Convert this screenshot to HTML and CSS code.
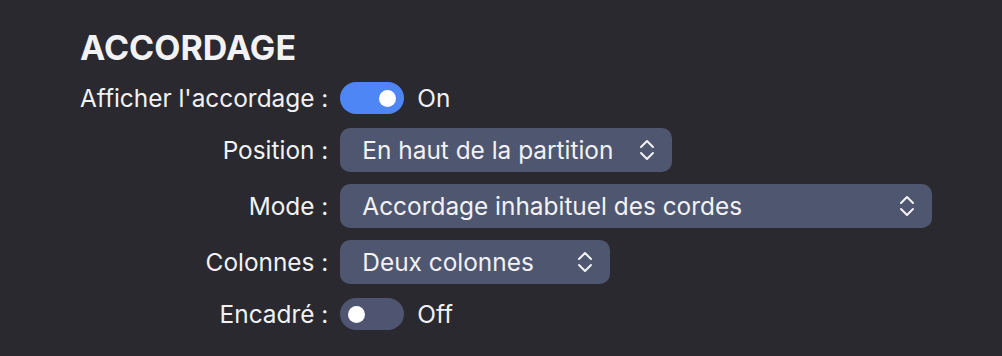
FILE: index.html
```html
<!DOCTYPE html>
<html lang="fr">
<head>
<meta charset="utf-8">
<link rel="stylesheet" href="styles.css">
</head>
<body>
<section class="panel">
  <h1 class="title">ACCORDAGE</h1>
  <div class="form">
    <label class="label">Afficher l'accordage :</label>
    <div class="control control-toggle">
      <span class="toggle toggle-on"><span class="knob"></span></span>
      <span class="state">On</span>
    </div>

    <label class="label">Position :</label>
    <div class="control">
      <div class="select select-position">
        <span class="select-text">En haut de la partition</span>
        <svg class="chevrons" width="16" height="24" viewBox="0 0 16 24"><polyline points="2,9 8,3 14,9"/><polyline points="2,15 8,21 14,15"/></svg>
      </div>
    </div>

    <label class="label">Mode :</label>
    <div class="control">
      <div class="select select-mode">
        <span class="select-text">Accordage inhabituel des cordes</span>
        <svg class="chevrons" width="16" height="24" viewBox="0 0 16 24"><polyline points="2,9 8,3 14,9"/><polyline points="2,15 8,21 14,15"/></svg>
      </div>
    </div>

    <label class="label">Colonnes :</label>
    <div class="control">
      <div class="select select-columns">
        <span class="select-text">Deux colonnes</span>
        <svg class="chevrons" width="16" height="24" viewBox="0 0 16 24"><polyline points="2,9 8,3 14,9"/><polyline points="2,15 8,21 14,15"/></svg>
      </div>
    </div>

    <label class="label">Encadré :</label>
    <div class="control control-toggle">
      <span class="toggle toggle-off"><span class="knob"></span></span>
      <span class="state">Off</span>
    </div>
  </div>
</section>
</body>
</html>
```

FILE: styles.css
```css
html, body {
  margin: 0;
  padding: 0;
}
body {
  background: #29292f;
  color: #f2f2f4;
  font-family: Inter, "Liberation Sans", sans-serif;
  width: 1002px;
  height: 356px;
  overflow: hidden;
}
.panel {
  padding: 26px 0 0 80px;
}
.title {
  margin: 0 0 10px 0;
  font-size: 34px;
  font-weight: 700;
  line-height: 44px;
  letter-spacing: 0;
}
.form {
  display: grid;
  grid-template-columns: auto 1fr;
  column-gap: 12px;
  row-gap: 12px;
  align-items: center;
}
.label {
  font-size: 24.4px;
  text-align: right;
  white-space: nowrap;
}
.control {
  display: flex;
  align-items: center;
  min-height: 36px;
}
.toggle {
  position: relative;
  width: 64px;
  height: 32px;
  border-radius: 16px;
  display: flex;
  align-items: center;
  box-sizing: border-box;
  padding: 0 8px;
}
.toggle-on {
  background: #4f86f6;
  justify-content: flex-end;
}
.toggle-off {
  background: #4f5570;
  justify-content: flex-start;
}
.knob {
  width: 17px;
  height: 17px;
  border-radius: 50%;
  background: #ffffff;
}
.state {
  font-size: 24.4px;
  margin-left: 13px;
}
.select {
  height: 44px;
  border-radius: 10px;
  background: #4f5670;
  display: flex;
  align-items: center;
  justify-content: space-between;
  box-sizing: border-box;
  padding: 0 17px 0 22px;
}
.select-text {
  font-size: 24.4px;
  white-space: nowrap;
}
.select-position { width: 332px; }
.select-mode { width: 592px; }
.select-columns { width: 270px; }
.chevrons {
  fill: none;
  stroke: #f2f2f4;
  stroke-width: 2;
  stroke-linecap: round;
  stroke-linejoin: round;
}
```
